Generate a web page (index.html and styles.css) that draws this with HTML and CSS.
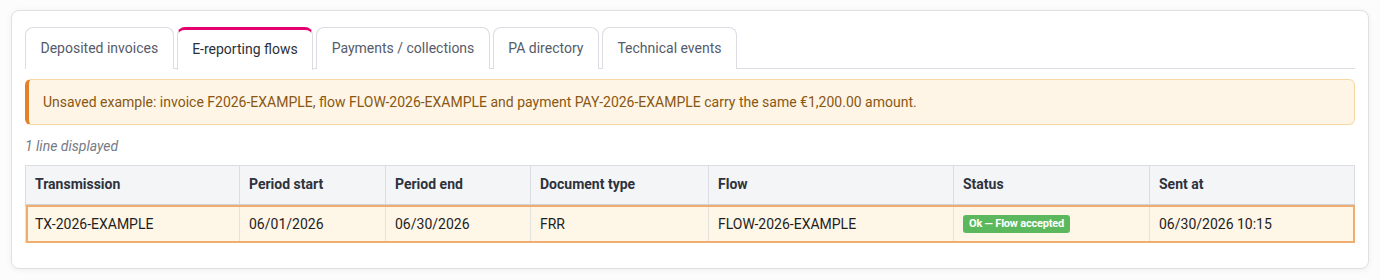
FILE: index.html
```html
<!DOCTYPE html>
<html>
<head>
  <meta charset="utf-8">
  <link rel="stylesheet" href="styles.css">
</head>
<body>
  <div class="card">
    <div class="tabs">
      <div class="tab">Deposited invoices</div>
      <div class="tab active">E-reporting flows</div>
      <div class="tab">Payments / collections</div>
      <div class="tab">PA directory</div>
      <div class="tab">Technical events</div>
    </div>

    <div class="alert">
      Unsaved example: invoice F2026-EXAMPLE, flow FLOW-2026-EXAMPLE and payment PAY-2026-EXAMPLE carry the same €1,200.00 amount.
    </div>

    <div class="count">1 line displayed</div>

    <table class="grid">
      <colgroup>
        <col style="width: 214px">
        <col style="width: 146px">
        <col style="width: 145px">
        <col style="width: 178px">
        <col style="width: 245px">
        <col style="width: 196px">
        <col>
      </colgroup>
      <thead>
        <tr>
          <th>Transmission</th>
          <th>Period start</th>
          <th>Period end</th>
          <th>Document type</th>
          <th>Flow</th>
          <th>Status</th>
          <th>Sent at</th>
        </tr>
      </thead>
      <tbody>
        <tr class="highlight">
          <td>TX-2026-EXAMPLE</td>
          <td>06/01/2026</td>
          <td>06/30/2026</td>
          <td>FRR</td>
          <td>FLOW-2026-EXAMPLE</td>
          <td><span class="badge badge-ok">Ok — Flow accepted</span></td>
          <td>06/30/2026 10:15</td>
        </tr>
      </tbody>
    </table>
  </div>
</body>
</html>
```

FILE: styles.css
```css
* {
  margin: 0;
  padding: 0;
  box-sizing: border-box;
}

body {
  font-family: Roboto, 'Liberation Sans', sans-serif;
  font-size: 14px;
  color: #222;
  background: #fcfcfc;
  padding: 10px 11px;
}

.card {
  background: white;
  border: 1px solid #e0e0e3;
  border-radius: 8px;
  box-shadow: 0 1px 6px rgba(0, 0, 0, 0.06);
  padding: 16px 13px 25px;
}

.tabs {
  display: flex;
  gap: 3px;
  border-bottom: 1px solid #dcdde3;
  height: 42px;
}

.tab {
  height: 42px;
  padding: 0 14.5px 2px;
  display: flex;
  align-items: center;
  border: 1px solid #dcdde3;
  border-bottom: none;
  border-radius: 8px 8px 0 0;
  background: white;
  color: #555b6a;
  font-size: 14px;
}

.tab.active {
  border-top: 3px solid #e4006f;
  color: #2b2f3a;
  margin-bottom: -1px;
  height: 43px;
  padding-bottom: 3px;
}

.alert {
  margin-top: 10px;
  background: #fef5e6;
  border: 1px solid #f6d9a2;
  border-left: 4px solid #e4802a;
  border-radius: 6px;
  padding: 0 14px;
  height: 46px;
  display: flex;
  align-items: center;
  color: #8a5712;
  font-size: 14px;
}

.count {
  margin-top: 12px;
  font-size: 14px;
  font-style: italic;
  color: #767b86;
  height: 18px;
  line-height: 18px;
}

.grid {
  margin-top: 10px;
  width: 100%;
  table-layout: fixed;
  border-collapse: collapse;
  border: 1px solid #dcdde2;
}

.grid th {
  text-align: left;
  font-weight: bold;
  color: #2e323c;
  background: #f4f5f7;
  height: 39px;
  padding: 0 9px 2px;
  border-left: 1px solid #dcdde2;
  border-bottom: 2px solid #cfd2d8;
}

.grid td {
  height: 38px;
  padding: 0 9px;
  border-left: 1px solid #e4e2dd;
  color: #1e1e1e;
}

.highlight {
  background: #fef6e7;
  outline: 2px solid #f1ad70;
  outline-offset: -2px;
}

.badge {
  display: inline-block;
  font-size: 11px;
  font-weight: bold;
  color: white;
  padding: 2px 6px;
  border-radius: 3px;
  line-height: 14px;
  letter-spacing: -0.2px;
}

.badge-ok {
  background: #5cb85c;
}
```
